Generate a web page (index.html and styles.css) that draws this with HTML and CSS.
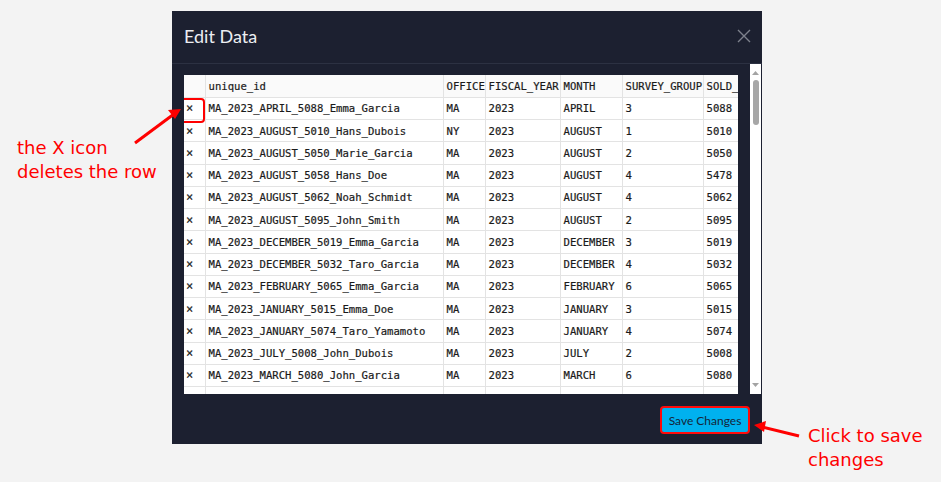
FILE: index.html
```html
<!DOCTYPE html>
<html>
<head>
<meta charset="utf-8">
<link rel="stylesheet" href="styles.css">
</head>
<body>
<div class="page">
  <div class="modal">
    <div class="modal-header">
      <h1 class="title">Edit Data</h1>
      <svg class="close" width="14" height="14" viewBox="0 0 14 14"><path d="M1 1L13 13M13 1L1 13" stroke="#7d818c" stroke-width="1.4" fill="none"/></svg>
    </div>
    <div class="modal-body">
      <div class="table-wrap">
        <table class="grid">
          <colgroup>
            <col class="c-del"><col class="c-id"><col class="c-office"><col class="c-fy"><col class="c-month"><col class="c-sg"><col class="c-sold">
          </colgroup>
          <thead>
            <tr><th></th><th>unique_id</th><th>OFFICE</th><th>FISCAL_YEAR</th><th>MONTH</th><th>SURVEY_GROUP</th><th>SOLD_PRICE</th></tr>
          </thead>
          <tbody>
            <tr><td class="del">×</td><td>MA_2023_APRIL_5088_Emma_Garcia</td><td>MA</td><td>2023</td><td>APRIL</td><td>3</td><td>5088</td></tr>
            <tr><td class="del">×</td><td>MA_2023_AUGUST_5010_Hans_Dubois</td><td>NY</td><td>2023</td><td>AUGUST</td><td>1</td><td>5010</td></tr>
            <tr><td class="del">×</td><td>MA_2023_AUGUST_5050_Marie_Garcia</td><td>MA</td><td>2023</td><td>AUGUST</td><td>2</td><td>5050</td></tr>
            <tr><td class="del">×</td><td>MA_2023_AUGUST_5058_Hans_Doe</td><td>MA</td><td>2023</td><td>AUGUST</td><td>4</td><td>5478</td></tr>
            <tr><td class="del">×</td><td>MA_2023_AUGUST_5062_Noah_Schmidt</td><td>MA</td><td>2023</td><td>AUGUST</td><td>4</td><td>5062</td></tr>
            <tr><td class="del">×</td><td>MA_2023_AUGUST_5095_John_Smith</td><td>MA</td><td>2023</td><td>AUGUST</td><td>2</td><td>5095</td></tr>
            <tr><td class="del">×</td><td>MA_2023_DECEMBER_5019_Emma_Garcia</td><td>MA</td><td>2023</td><td>DECEMBER</td><td>3</td><td>5019</td></tr>
            <tr><td class="del">×</td><td>MA_2023_DECEMBER_5032_Taro_Garcia</td><td>MA</td><td>2023</td><td>DECEMBER</td><td>4</td><td>5032</td></tr>
            <tr><td class="del">×</td><td>MA_2023_FEBRUARY_5065_Emma_Garcia</td><td>MA</td><td>2023</td><td>FEBRUARY</td><td>6</td><td>5065</td></tr>
            <tr><td class="del">×</td><td>MA_2023_JANUARY_5015_Emma_Doe</td><td>MA</td><td>2023</td><td>JANUARY</td><td>3</td><td>5015</td></tr>
            <tr><td class="del">×</td><td>MA_2023_JANUARY_5074_Taro_Yamamoto</td><td>MA</td><td>2023</td><td>JANUARY</td><td>4</td><td>5074</td></tr>
            <tr><td class="del">×</td><td>MA_2023_JULY_5008_John_Dubois</td><td>MA</td><td>2023</td><td>JULY</td><td>2</td><td>5008</td></tr>
            <tr><td class="del">×</td><td>MA_2023_MARCH_5080_John_Garcia</td><td>MA</td><td>2023</td><td>MARCH</td><td>6</td><td>5080</td></tr>
            <tr><td class="del">×</td><td>MA_2023_NOVEMBER_5036_Hans_Doe</td><td>MA</td><td>2023</td><td>NOVEMBER</td><td>1</td><td>5036</td></tr>
          </tbody>
        </table>
        <div class="hl-x"></div>
      </div>
      <div class="scrollbar">
        <svg class="arrow-up" width="7" height="4" viewBox="0 0 7 4"><path d="M0 4L3.5 0L7 4Z" fill="#a3a3a3"/></svg>
        <div class="thumb"></div>
        <div class="track-space"></div>
        <svg class="arrow-down" width="7" height="4" viewBox="0 0 7 4"><path d="M0 0L3.5 4L7 0Z" fill="#a3a3a3"/></svg>
      </div>
    </div>
    <div class="modal-footer">
      <button class="save">Save Changes</button>
    </div>
  </div>

  <div class="note note-left">the X icon<br>deletes the row</div>
  <div class="note note-right">Click to save<br>changes</div>
  <svg class="arrows" width="941" height="482" viewBox="0 0 941 482">
    <path d="M135 143L174 114" stroke="#ff0000" stroke-width="3" fill="none"/>
    <path d="M181 109L168 110L175 119Z" fill="#ff0000"/>
    <path d="M799 436L762 427" stroke="#ff0000" stroke-width="3" fill="none"/>
    <path d="M754 425L766 421L764 432Z" fill="#ff0000"/>
  </svg>
</div>
</body>
</html>
```

FILE: styles.css
```css
* { box-sizing: border-box; }
html, body { margin: 0; padding: 0; }
body {
  background: #f3f3f3;
  width: 941px;
  height: 482px;
  overflow: hidden;
  font-family: "DejaVu Sans", sans-serif;
}
.page {
  position: relative;
  width: 941px;
  height: 482px;
  padding: 11px 0 0 172px;
}
.modal {
  width: 590px;
  height: 433px;
  background: #1c2030;
  display: flex;
  flex-direction: column;
}
.modal-header {
  height: 53px;
  border-bottom: 1px solid #2c3142;
  display: flex;
  align-items: center;
  justify-content: space-between;
  padding: 0 12px 2px 12px;
}
.title {
  margin: 0;
  font-family: Lato, "Open Sans", sans-serif;
  font-weight: 400;
  font-size: 18px;
  color: #eceef2;
}
.close { margin-right: -1px; }
.modal-body {
  display: flex;
  height: 330px;
  padding-left: 12px;
}
.table-wrap {
  position: relative;
  width: 554px;
  height: 319px;
  margin-top: 11px;
  background: #ffffff;
  overflow: hidden;
}
.grid {
  border-collapse: collapse;
  table-layout: fixed;
  width: 600px;
  font-family: "DejaVu Sans Mono", "Liberation Mono", monospace;
  font-size: 10.6px;
  color: #1a1a1a;
  -webkit-text-stroke: 0.2px #1a1a1a;
}
.c-del { width: 21px; }
.c-id { width: 238px; }
.c-office { width: 42px; }
.c-fy { width: 75px; }
.c-month { width: 62px; }
.c-sg { width: 81px; }
.c-sold { width: 81px; }
.grid th, .grid td {
  height: 22.25px;
  padding: 0 0 0 3px;
  text-align: left;
  font-weight: 400;
  white-space: nowrap;
  overflow: hidden;
  border: 1px solid #e3e3e3;
}
.grid th { background: #fafafa; }
.grid tr > :first-child { border-left: none; }
.grid thead th { border-top: none; }
.grid td.del {
  font-size: 12px;
  padding-left: 2px;
}
.hl-x {
  position: absolute;
  left: -4px;
  top: 23px;
  width: 25px;
  height: 25px;
  border: 2px solid #ff0000;
  border-radius: 4px;
}
.scrollbar {
  width: 11px;
  margin-left: 12px;
  background: #ffffff;
  display: flex;
  flex-direction: column;
  align-items: center;
  padding: 7px 0 7px;
}
.thumb {
  width: 6px;
  height: 45px;
  margin-top: 5px;
  border-radius: 3px;
  background: #a7a7a7;
}
.track-space { flex: 1; }
.modal-footer {
  flex: 1;
  display: flex;
  justify-content: flex-end;
  align-items: flex-start;
  padding: 12px 12px 0 0;
}
.save {
  width: 90px;
  height: 28px;
  background: #00b1ef;
  border: 2px solid #ff0a0a;
  border-radius: 4px;
  font-family: Lato, "Open Sans", sans-serif;
  font-size: 12px;
  color: #16253a;
  padding: 0;
}
.note {
  position: absolute;
  color: #ff0000;
  font-family: "DejaVu Sans", sans-serif;
  font-size: 18px;
  line-height: 24px;
}
.note-left { left: 17px; top: 136px; }
.note-right { left: 808px; top: 424px; }
.arrows {
  position: absolute;
  left: 0;
  top: 0;
  pointer-events: none;
}
```
